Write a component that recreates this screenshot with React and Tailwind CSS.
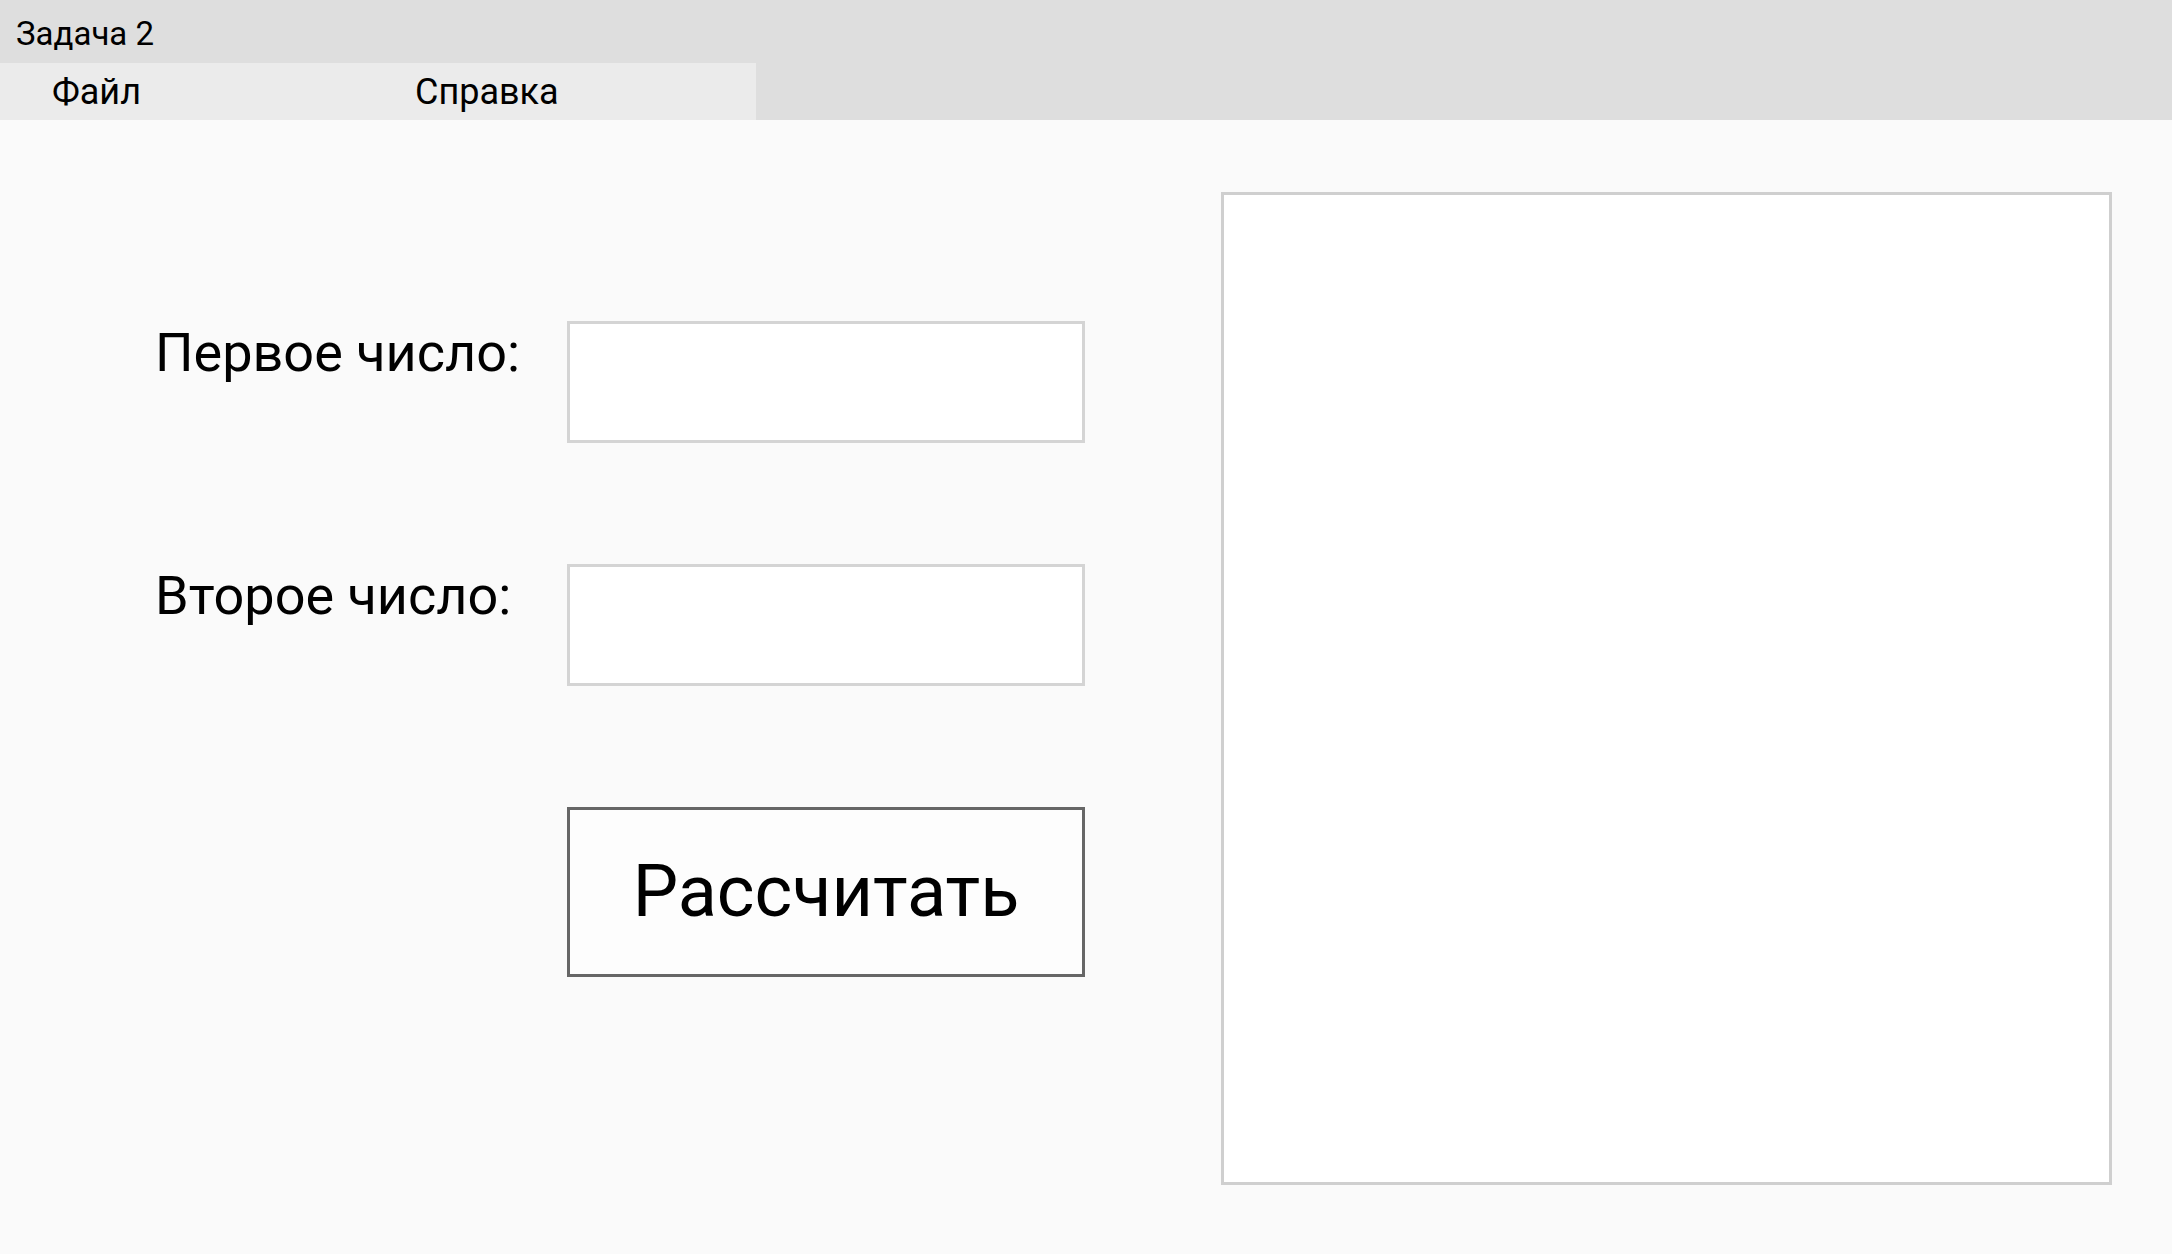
export default function App() {
  const field =
    "w-[518px] h-[122px] bg-white border-[3px] border-[#d4d4d4] outline-none px-4 text-[40px]"

  return (
    <div className="min-h-[1254px] w-full flex flex-col bg-[#fafafa] text-black font-['Roboto',sans-serif]">
      {/* Title bar */}
      <div className="h-[63px] bg-[#dedede] flex items-center pl-[16px] pt-[4px]">
        <span className="text-[33px] leading-none">Задача 2</span>
      </div>

      {/* Menu */}
      <div className="h-[57px] bg-[#dedede]">
        <div className="w-[756px] h-full bg-[#ebebeb] flex items-center">
          <span className="w-[363px] ml-[52px] text-[36px] leading-none">Файл</span>
          <span className="text-[36px] leading-none">Справка</span>
        </div>
      </div>

      {/* Content */}
      <div className="flex-1 flex">
        <div className="flex-1 pl-[155px] pt-[201px]">
          <div className="grid grid-cols-[412px_518px] gap-y-[121px]">
            <label className="mt-[5px] text-[54px] leading-none">Первое число:</label>
            <input className={field} />

            <label className="mt-[5px] text-[54px] leading-none">Второе число:</label>
            <input className={field} />

            <div />
            <button className="w-[518px] h-[170px] bg-[#fdfdfd] border-[3px] border-[#666666] text-[72px] leading-none flex items-center justify-center">
              Рассчитать
            </button>
          </div>
        </div>

        <div className="w-[891px] h-[993px] mt-[72px] mr-[60px] bg-white border-[3px] border-[#cfcfcf]" />
      </div>
    </div>
  )
}
